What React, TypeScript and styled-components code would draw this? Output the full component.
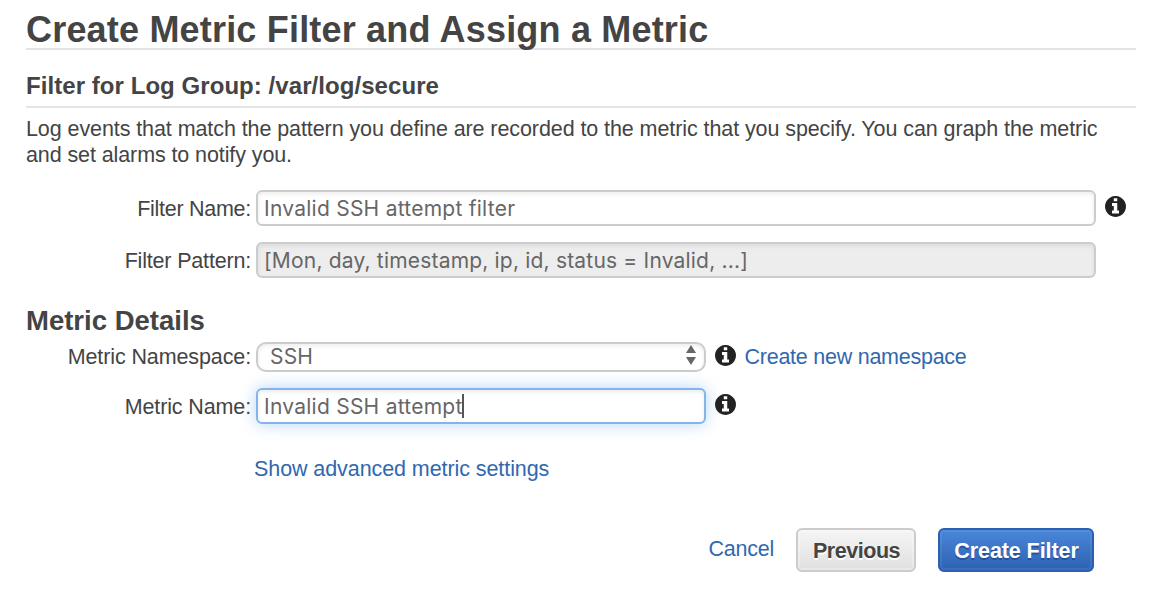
import React from 'react';
import styled, { createGlobalStyle } from 'styled-components';

const GlobalStyle = createGlobalStyle`
  *, *::before, *::after { box-sizing: border-box; }
  body {
    margin: 0;
    background: #fff;
    color: #444;
    font: 21.5px/26px "Liberation Sans", Arial, sans-serif;
  }
`;

const Page = styled.main`
  width: 1174px;
  height: 596px;
  padding: 0 38px 0 26px;
  overflow: hidden;
`;

const Title = styled.h1`
  margin: 0;
  height: 50px;
  padding-top: 9px;
  border-bottom: 2px solid #e4e4e4;
  font-size: 36px;
  line-height: 42px;
  font-weight: 700;
  white-space: nowrap;
`;

const Subtitle = styled.h2`
  margin: 0;
  height: 58px;
  padding-top: 21px;
  border-bottom: 2px solid #e4e4e4;
  font-size: 24px;
  line-height: 30px;
  font-weight: 700;
  white-space: nowrap;
`;

const Description = styled.p`
  margin: 8px 0 22px;
  white-space: nowrap;
`;

const SectionTitle = styled.h3`
  margin: 27px 0 5px;
  height: 32px;
  font-size: 27.5px;
  line-height: 32px;
  font-weight: 700;
`;

const Row = styled.div`
  display: flex;
  align-items: center;
  margin-bottom: 16px;
`;

const Label = styled.label<{ $flush?: boolean }>`
  width: 225px;
  margin-right: 5px;
  padding-top: ${(p) => (p.$flush ? 0 : 1)}px;
  text-align: right;
  white-space: nowrap;
`;

const Field = styled.div<{ $width: number; $disabled?: boolean; $focused?: boolean }>`
  display: flex;
  align-items: center;
  width: ${(p) => p.$width}px;
  height: 36px;
  padding: 2px 0 0 6px;
  border: 2px solid ${(p) => (p.$focused ? '#84b4ea' : '#ccc')};
  border-radius: 6px;
  background: ${(p) => (p.$disabled ? '#ededed' : '#fff')};
  box-shadow: inset 0 2px 4px rgba(0, 0, 0, 0.08)
    ${(p) => (p.$focused ? ', 0 0 16px rgba(90, 160, 235, 0.45)' : '')};
  color: #666;
  font: 21px/26px Inter, sans-serif;
  white-space: nowrap;
`;

const Select = styled.div`
  display: flex;
  align-items: center;
  justify-content: space-between;
  width: 450px;
  height: 30px;
  padding: 0 7px 0 12px;
  border: 2px solid #ccc;
  border-radius: 10px;
  box-shadow: inset 0 2px 4px rgba(0, 0, 0, 0.08);
  color: #666;
  font: 21px/26px Inter, sans-serif;
`;

const Arrows = styled.svg`
  width: 12px;
  height: 22px;
  margin-bottom: 4px;
`;

const Caret = styled.span`
  width: 2px;
  height: 24px;
  margin: 0 0 2px -1px;
  background: #555;
`;

const InfoSvg = styled.svg`
  width: 21px;
  height: 21px;
  margin: 0 9px 3px 8.5px;
  fill: #222;
`;

const Info = () => (
  <InfoSvg viewBox="128 128 1536 1536">
    <path d="M1152 1376v-160q0-14-9-23t-23-9h-96v-512q0-14-9-23t-23-9h-320q-14 0-23 9t-9 23v160q0 14 9 23t23 9h96v320h-96q-14 0-23 9t-9 23v160q0 14 9 23t23 9h448q14 0 23-9t9-23zM1024 480v-160q0-14-9-23t-23-9h-192q-14 0-23 9t-9 23v160q0 14 9 23t23 9h192q14 0 23-9t9-23zM1664 896q0 209-103 385.5t-279.5 279.5-385.5 103-385.5-103-279.5-279.5-103-385.5 103-385.5 279.5-279.5 385.5-103 385.5 103 279.5 279.5 103 385.5z" />
  </InfoSvg>
);

const Link = styled.a<{ $track?: number }>`
  color: #3068b0;
  letter-spacing: ${(p) => p.$track ?? 0}px;
  white-space: nowrap;
`;

const Advanced = styled.div`
  margin: 32px 0 0 228px;
`;

const Actions = styled.footer`
  display: flex;
  align-items: center;
  justify-content: flex-end;
  gap: 22px;
  margin-top: 46px;
  padding-right: 42px;

  > a {
    margin-bottom: 2px;
  }
`;

const Button = styled.button<{ $primary?: boolean }>`
  width: ${(p) => (p.$primary ? 156 : 120)}px;
  height: 44px;
  padding: 2px 0 0 1px;
  border: 2px solid ${(p) => (p.$primary ? '#2a60b4' : '#ccc')};
  border-radius: 6px;
  background: ${(p) =>
    p.$primary ? 'linear-gradient(#4a86d8, #2d62b3)' : 'linear-gradient(#f5f5f5, #e0e0e0)'};
  box-shadow: inset 0 0 0 2px rgba(255, 255, 255, ${(p) => (p.$primary ? 0.07 : 0.25)});
  color: ${(p) => (p.$primary ? '#fff' : '#444')};
  text-shadow: ${(p) => (p.$primary ? '0 2px 0 #24539b' : '0 2px 0 #fff')};
  font: 700 21.5px/26px "Liberation Sans", Arial, sans-serif;
  letter-spacing: ${(p) => (p.$primary ? -0.08 : -0.45)}px;
  white-space: nowrap;
`;

const Text = styled.span<{ $track?: number }>`
  letter-spacing: ${(p) => p.$track ?? 0}px;
`;

export default function App() {
  return (
    <>
      <GlobalStyle />
      <Page>
        <Title><Text $track={0.19}>Create Metric Filter and Assign a Metric</Text></Title>
        <Subtitle><Text $track={0.06}>Filter for Log Group: /var/log/secure</Text></Subtitle>
        <Description>
          <Text $track={-0.085}>Log events that match the pattern you define are recorded to the metric that you specify. You can graph the metric</Text>
          <br />
          <Text $track={-0.1}>and set alarms to notify you.</Text>
        </Description>
        <Row>
          <Label><Text $track={-0.27}>Filter Name:</Text></Label>
          <Field $width={840}><Text $track={0.25}>Invalid SSH attempt filter</Text></Field>
          <Info />
        </Row>
        <Row>
          <Label><Text $track={-0.18}>Filter Pattern:</Text></Label>
          <Field $width={840} $disabled><Text $track={0.19}>[Mon, day, timestamp, ip, id, status = Invalid, ...]</Text></Field>
        </Row>
        <SectionTitle><Text>Metric Details</Text></SectionTitle>
        <Row>
          <Label $flush><Text $track={-0.11}>Metric Namespace:</Text></Label>
          <Select>
            <Text $track={0.2}>SSH</Text>
            <Arrows viewBox="0 0 12 22" fill="#666">
              <path d="M6 1L11 9H1zM6 21L1 13H11z" />
            </Arrows>
          </Select>
          <Info />
          <Link $track={-0.25}>Create new namespace</Link>
        </Row>
        <Row>
          <Label><Text $track={-0.13}>Metric Name:</Text></Label>
          <Field $width={450} $focused><Text $track={0.25}>Invalid SSH attempt</Text><Caret /></Field>
          <Info />
        </Row>
        <Advanced><Link $track={-0.08}>Show advanced metric settings</Link></Advanced>
        <Actions>
          <Link $track={-0.25}>Cancel</Link>
          <Button>Previous</Button>
          <Button $primary>Create Filter</Button>
        </Actions>
      </Page>
    </>
  );
}
